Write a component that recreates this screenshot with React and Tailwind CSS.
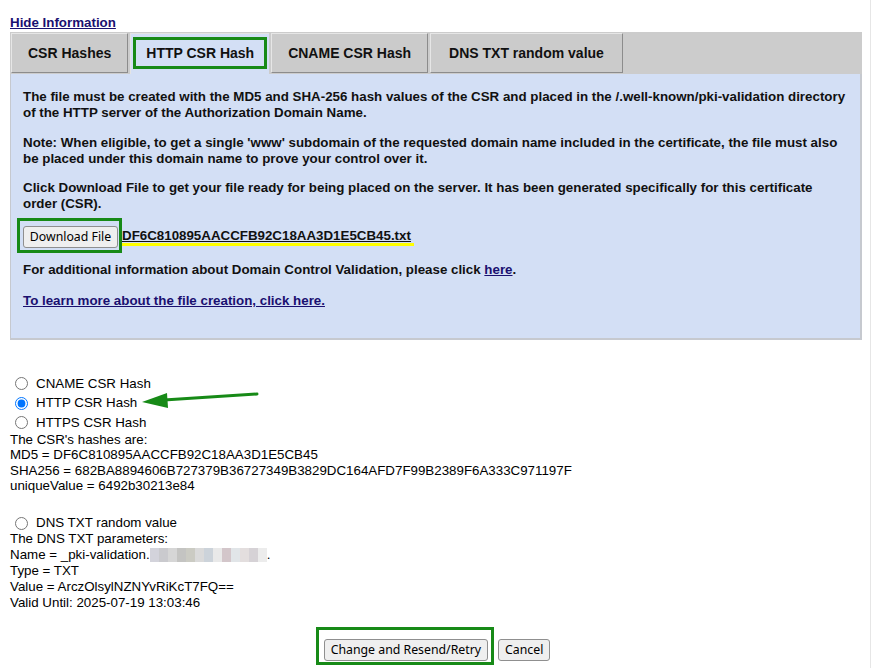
const TABS = [
  { label: 'CSR Hashes' },
  { label: 'HTTP CSR Hash', active: true },
  { label: 'CNAME CSR Hash' },
  { label: 'DNS TXT random value', wide: true },
];

// blurred-out domain in the DNS TXT name
const BLUR = ['#d3d3db', '#cacace', '#d6d6d6', '#c4c4c2', '#cbcbc3', '#dadada', '#ccd3da', '#e9e9e9', '#d3c6ca', '#e1e5e8', '#e3dede', '#d6d2d6', '#ececec'];

function Tab({ label, active, wide }) {
  if (active) {
    return (
      <div className="h-[41px] px-[2px] pt-[3px] bg-[#d3dff5] border-l border-t border-[#e4e4e4]">
        <div className="h-[32px] px-[10px] flex items-center border-[3px] border-[#178a17] text-[14px] font-bold text-[#111]">
          {label}
        </div>
      </div>
    );
  }
  return (
    <div className={`h-[40px] ${wide ? 'px-[18px]' : 'px-[16px]'} flex items-center bg-[#cbcbcb] border border-t-[#e6e6e6] border-l-[#e6e6e6] border-r-[#8c8c8c] border-b-[#8c8c8c] text-[14px] font-bold text-[#111]`}>
      {label}
    </div>
  );
}

function Radio({ label, checked }) {
  return (
    <label className="flex items-center h-[19.5px]">
      <input type="radio" name="dcv" defaultChecked={checked} className="w-[13px] h-[13px] ml-[15px] mr-[8px] my-0" />
      <span>{label}</span>
    </label>
  );
}

function FormButton({ children }) {
  return (
    <button className="h-[22px] px-[6px] bg-[#efefef] border border-[#8f8f8f] rounded-[3px] text-[12.3px] text-black font-['Noto_Sans',sans-serif] leading-none">
      {children}
    </button>
  );
}

export default function App() {
  return (
    <div className="relative w-[871px] h-[668px] border-r border-[#e6e6e6] bg-white font-['Liberation_Sans',Arial,sans-serif] text-[13.33px] text-black overflow-hidden">
      <div className="pl-[10px] pr-[8px]">
        <div className="pt-[15px] h-[32px] leading-[16px]">
          <a href="#" className="font-bold underline text-[#1a1070]">Hide Information</a>
        </div>

        {/* tab bar */}
        <div className="h-[42px] bg-[#cccccc] flex items-start gap-[2px] pl-[1px] pt-[1px]">
          {TABS.map((t) => (
            <Tab key={t.label} {...t} />
          ))}
        </div>

        {/* tab content */}
        <div className="h-[266px] bg-[#d3dff5] border-l border-r-2 border-b-2 border-[#c6c9cf] pl-[12px] pr-[14px] pt-[15px] font-bold leading-[16px] text-[#111]">
          <p>
            The file must be created with the MD5 and SHA-256 hash values of the CSR and placed in the /.well-known/pki-validation directory of the HTTP server of the Authorization Domain Name.
          </p>
          <p className="mt-[14px]">
            Note: When eligible, to get a single 'www' subdomain of the requested domain name included in the certificate, the file must also be placed under this domain name to prove your control over it.
          </p>
          <p className="mt-[13px]">
            Click Download File to get your file ready for being placed on the server. It has been generated specifically for this certificate order (CSR).
          </p>
          <div className="mt-[6px] -ml-[6px] flex items-center">
            <div className="border-[3px] border-[#178a17] pl-[3px] pr-[1px] pt-[5px] pb-[2px]">
              <button className="h-[22px] w-[95px] bg-[#efefef] border border-[#8f8f8f] rounded-[3px] text-[12.3px] font-normal text-black font-['Noto_Sans',sans-serif] leading-none">
                Download File
              </button>
            </div>
            <span className="mt-[3px] pr-[3px] border-b-[3px] border-[#ffff00] leading-[14px]">
              <span className="underline">DF6C810895AACCFB92C18AA3D1E5CB45.txt</span>
            </span>
          </div>
          <p className="mt-[9px]">
            For additional information about Domain Control Validation, please click{' '}
            <a href="#" className="underline text-[#1a1070]">here</a>.
          </p>
          <p className="mt-[15px]">
            <a href="#" className="underline text-[#1a1070]">To learn more about the file creation, click here.</a>
          </p>
        </div>
      </div>

      {/* method selection */}
      <div className="mt-[34px]">
        <Radio label="CNAME CSR Hash" />
        <Radio label="HTTP CSR Hash" checked />
        <Radio label="HTTPS CSR Hash" />
        <div className="pl-[10px] leading-[15.5px] -mt-[1px]">
          <div>The CSR's hashes are:</div>
          <div>MD5 = DF6C810895AACCFB92C18AA3D1E5CB45</div>
          <div>SHA256 = 682BA8894606B727379B36727349B3829DC164AFD7F99B2389F6A333C971197F</div>
          <div>uniqueValue = 6492b30213e84</div>
        </div>

        <div className="mt-[20px]">
          <Radio label="DNS TXT random value" />
        </div>
        <div className="pl-[10px] leading-[16px] -mt-[2px]">
          <div>The DNS TXT parameters:</div>
          <div className="flex items-center">
            <span>Name = _pki-validation.</span>
            <span className="flex h-[14px]">
              {BLUR.map((c, i) => (
                <span key={i} className="w-[9px] h-full" style={{ background: c }} />
              ))}
            </span>
            <span>.</span>
          </div>
          <div>Type = TXT</div>
          <div>Value = ArczOlsylNZNYvRiKcT7FQ==</div>
          <div>Valid Until: 2025-07-19 13:03:46</div>
        </div>

        <div className="mt-[16px] flex justify-center items-end gap-[4px] pr-[4px]">
          <div className="border-[3px] border-[#178a17] pl-[5px] pr-[3px] pt-[9px] pb-[1px]">
            <FormButton>Change and Resend/Retry</FormButton>
          </div>
          <div className="pb-[4px]">
            <FormButton>Cancel</FormButton>
          </div>
        </div>
      </div>

      {/* pointer arrow */}
      <svg className="absolute left-[138px] top-[386px]" width="124" height="26" viewBox="0 0 124 26">
        <line x1="119" y1="8" x2="26" y2="14" stroke="#178a17" strokeWidth="3" strokeLinecap="round" />
        <polygon points="4,16 29,7 30,22" fill="#178a17" />
      </svg>
    </div>
  );
}
